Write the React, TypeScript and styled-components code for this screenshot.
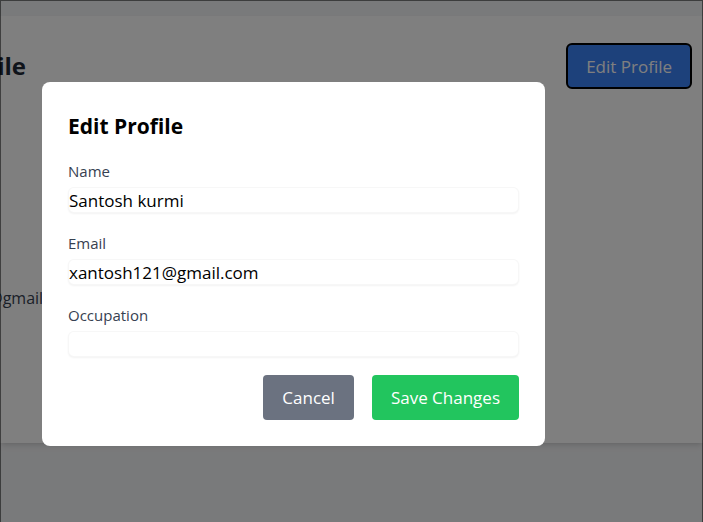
import React from "react";
import styled, { createGlobalStyle } from "styled-components";

const GlobalStyle = createGlobalStyle`
  html, body {
    margin: 0;
    padding: 0;
    background: #f3f4f6;
    font-family: "Open Sans", "Noto Sans", sans-serif;
    overflow: hidden;
  }
  * { box-sizing: border-box; }
`;

const Page = styled.div`
  min-height: 100vh;
  padding-top: 16px;
  background: #f3f4f6;
`;

const Card = styled.section`
  height: 427px;
  background: #ffffff;
  box-shadow: 0 4px 6px -1px rgba(0, 0, 0, 0.1), 0 2px 4px -2px rgba(0, 0, 0, 0.1);
  overflow: hidden;
`;

const CardHeader = styled.header`
  display: flex;
  align-items: center;
  justify-content: space-between;
  padding: 27px 11px 0 0;
`;

const TitleSlot = styled.div`
  width: 26px;
  display: flex;
  justify-content: flex-end;
`;

const PageTitle = styled.h1`
  margin: 0;
  font-size: 24px;
  line-height: 32px;
  font-weight: 700;
  color: #1f2937;
  white-space: nowrap;
`;

const EditButton = styled.button`
  height: 46px;
  padding: 0 18px;
  border: 2px solid #000000;
  border-radius: 6px;
  background: #3b82f6;
  color: #ffffff;
  font-family: inherit;
  font-size: 17px;
`;

const Details = styled.div`
  margin: 197px 0 0 -99px;
  display: flex;
  flex-direction: column;
  gap: 8px;
`;

const DetailLine = styled.p`
  margin: 0;
  font-size: 16px;
  line-height: 24px;
  color: #374151;
  white-space: nowrap;
`;

const Overlay = styled.div`
  position: fixed;
  inset: 0;
  background: rgba(0, 0, 0, 0.5);
  border: 1px solid rgba(0, 0, 0, 0.5);
  border-bottom: none;
  display: flex;
  align-items: flex-start;
  padding: 81px 0 0 41px;
`;

const Modal = styled.div`
  width: 503px;
  background: #ffffff;
  border-radius: 8px;
  padding: 30px 26px 26px;
`;

const ModalTitle = styled.h2`
  margin: 0 0 21px;
  font-size: 21px;
  line-height: 28px;
  font-weight: 700;
  color: #000000;
`;

const Form = styled.form`
  display: flex;
  flex-direction: column;
  gap: 20px;
`;

const Field = styled.div`
  display: flex;
  flex-direction: column;
  gap: 6px;
`;

const Label = styled.label`
  font-size: 15px;
  line-height: 20px;
  color: #374151;
`;

const Input = styled.input`
  height: 26px;
  padding: 0;
  border: 1px solid rgba(0, 0, 0, 0.03);
  border-radius: 6px;
  box-shadow: 0 1px 2px 0 rgba(0, 0, 0, 0.05);
  font-family: inherit;
  font-size: 17px;
  line-height: 24px;
  color: #000000;
  background: #ffffff;
  outline: none;
`;

const Actions = styled.div`
  display: flex;
  justify-content: flex-end;
  gap: 18px;
  margin-top: -2px;
`;

const ActionButton = styled.button<{ $variant: "muted" | "primary" }>`
  height: 45px;
  padding: 0 19px;
  border: none;
  border-radius: 4px;
  background: ${(p) => (p.$variant === "primary" ? "#22c55e" : "#6b7280")};
  color: #ffffff;
  font-family: inherit;
  font-size: 17px;
`;

export default function App() {
  return (
    <>
      <GlobalStyle />
      <Page>
        <Card>
          <CardHeader>
            <TitleSlot>
              <PageTitle>User Profile</PageTitle>
            </TitleSlot>
            <EditButton>Edit Profile</EditButton>
          </CardHeader>
          <Details>
            <DetailLine>xantosh121@gmail.com</DetailLine>
          </Details>
        </Card>
      </Page>
      <Overlay>
        <Modal>
          <ModalTitle>Edit Profile</ModalTitle>
          <Form onSubmit={(e) => e.preventDefault()}>
            <Field>
              <Label htmlFor="name">Name</Label>
              <Input id="name" defaultValue="Santosh kurmi" />
            </Field>
            <Field>
              <Label htmlFor="email">Email</Label>
              <Input id="email" defaultValue="xantosh121@gmail.com" />
            </Field>
            <Field>
              <Label htmlFor="occupation">Occupation</Label>
              <Input id="occupation" defaultValue="" />
            </Field>
            <Actions>
              <ActionButton type="button" $variant="muted">Cancel</ActionButton>
              <ActionButton type="submit" $variant="primary">Save Changes</ActionButton>
            </Actions>
          </Form>
        </Modal>
      </Overlay>
    </>
  );
}
